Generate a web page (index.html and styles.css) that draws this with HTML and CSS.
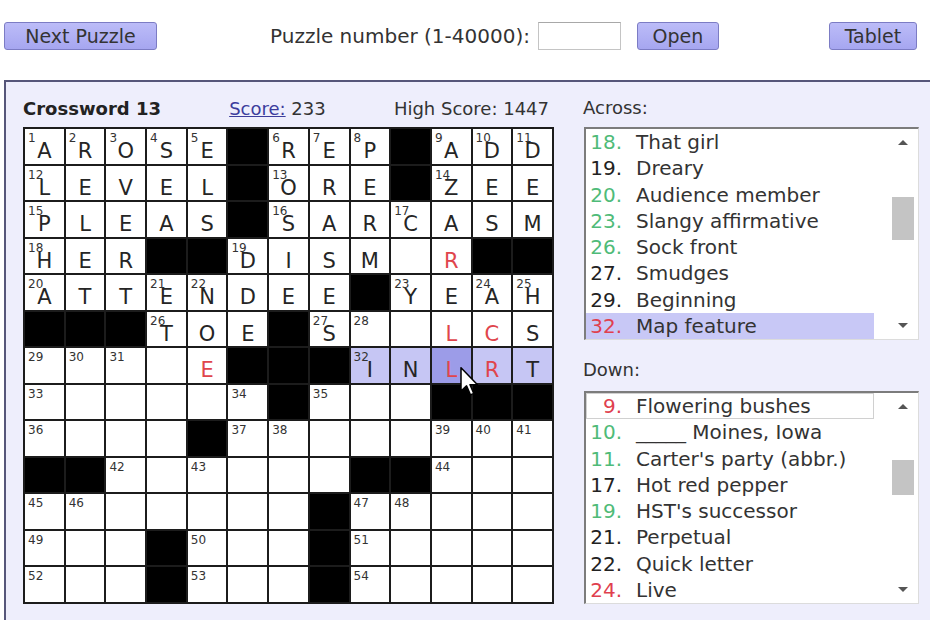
FILE: index.html
```html
<!DOCTYPE html>
<html>
<head>
<meta charset="utf-8">
<title>Crossword 13</title>
<link rel="stylesheet" href="styles.css">
</head>
<body>
<div class="top">
  <button class="btn next">Next Puzzle</button>
  <span class="lbl">Puzzle number (1-40000):</span>
  <input class="pin" type="text">
  <button class="btn open">Open</button>
  <button class="btn tablet">Tablet</button>
</div>
<div class="panel">
  <div class="left">
    <div class="head">
      <b class="title">Crossword 13</b>
      <span class="score"><a class="slink">Score:</a> 233</span>
      <span class="high">High Score: 1447</span>
    </div>
    <div class="grid">
      <div class="c"><i>1</i>A</div><div class="c"><i>2</i>R</div><div class="c"><i>3</i>O</div><div class="c"><i>4</i>S</div><div class="c"><i>5</i>E</div><div class="b"></div><div class="c"><i>6</i>R</div><div class="c"><i>7</i>E</div><div class="c"><i>8</i>P</div><div class="b"></div><div class="c"><i>9</i>A</div><div class="c"><i>10</i>D</div><div class="c"><i>11</i>D</div>
      <div class="c"><i>12</i>L</div><div class="c">E</div><div class="c">V</div><div class="c">E</div><div class="c">L</div><div class="b"></div><div class="c"><i>13</i>O</div><div class="c">R</div><div class="c">E</div><div class="b"></div><div class="c"><i>14</i>Z</div><div class="c">E</div><div class="c">E</div>
      <div class="c"><i>15</i>P</div><div class="c">L</div><div class="c">E</div><div class="c">A</div><div class="c">S</div><div class="b"></div><div class="c"><i>16</i>S</div><div class="c">A</div><div class="c">R</div><div class="c"><i>17</i>C</div><div class="c">A</div><div class="c">S</div><div class="c">M</div>
      <div class="c"><i>18</i>H</div><div class="c">E</div><div class="c">R</div><div class="b"></div><div class="b"></div><div class="c"><i>19</i>D</div><div class="c">I</div><div class="c">S</div><div class="c">M</div><div class="c"></div><div class="c red">R</div><div class="b"></div><div class="b"></div>
      <div class="c"><i>20</i>A</div><div class="c">T</div><div class="c">T</div><div class="c"><i>21</i>E</div><div class="c"><i>22</i>N</div><div class="c">D</div><div class="c">E</div><div class="c">E</div><div class="b"></div><div class="c"><i>23</i>Y</div><div class="c">E</div><div class="c"><i>24</i>A</div><div class="c"><i>25</i>H</div>
      <div class="b"></div><div class="b"></div><div class="b"></div><div class="c"><i>26</i>T</div><div class="c">O</div><div class="c">E</div><div class="b"></div><div class="c"><i>27</i>S</div><div class="c"><i>28</i></div><div class="c"></div><div class="c red">L</div><div class="c red">C</div><div class="c">S</div>
      <div class="c"><i>29</i></div><div class="c"><i>30</i></div><div class="c"><i>31</i></div><div class="c"></div><div class="c red">E</div><div class="b"></div><div class="b"></div><div class="b"></div><div class="c hl"><i>32</i>I</div><div class="c hl">N</div><div class="c cur red">L</div><div class="c hl red">R</div><div class="c hl">T</div>
      <div class="c"><i>33</i></div><div class="c"></div><div class="c"></div><div class="c"></div><div class="c"></div><div class="c"><i>34</i></div><div class="b"></div><div class="c"><i>35</i></div><div class="c"></div><div class="c"></div><div class="b"></div><div class="b"></div><div class="b"></div>
      <div class="c"><i>36</i></div><div class="c"></div><div class="c"></div><div class="c"></div><div class="b"></div><div class="c"><i>37</i></div><div class="c"><i>38</i></div><div class="c"></div><div class="c"></div><div class="c"></div><div class="c"><i>39</i></div><div class="c"><i>40</i></div><div class="c"><i>41</i></div>
      <div class="b"></div><div class="b"></div><div class="c"><i>42</i></div><div class="c"></div><div class="c"><i>43</i></div><div class="c"></div><div class="c"></div><div class="c"></div><div class="b"></div><div class="b"></div><div class="c"><i>44</i></div><div class="c"></div><div class="c"></div>
      <div class="c"><i>45</i></div><div class="c"><i>46</i></div><div class="c"></div><div class="c"></div><div class="c"></div><div class="c"></div><div class="c"></div><div class="b"></div><div class="c"><i>47</i></div><div class="c"><i>48</i></div><div class="c"></div><div class="c"></div><div class="c"></div>
      <div class="c"><i>49</i></div><div class="c"></div><div class="c"></div><div class="b"></div><div class="c"><i>50</i></div><div class="c"></div><div class="c"></div><div class="b"></div><div class="c"><i>51</i></div><div class="c"></div><div class="c"></div><div class="c"></div><div class="c"></div>
      <div class="c"><i>52</i></div><div class="c"></div><div class="c"></div><div class="b"></div><div class="c"><i>53</i></div><div class="c"></div><div class="c"></div><div class="b"></div><div class="c"><i>54</i></div><div class="c"></div><div class="c"></div><div class="c"></div><div class="c"></div>
    </div>
  </div>
  <div class="right">
    <div class="cl-label">Across:</div>
    <div class="listbox">
      <ul class="clues">
        <li><span class="n g">18.</span>That girl</li>
        <li><span class="n">19.</span>Dreary</li>
        <li><span class="n g">20.</span>Audience member</li>
        <li><span class="n g">23.</span>Slangy affirmative</li>
        <li><span class="n g">26.</span>Sock front</li>
        <li><span class="n">27.</span>Smudges</li>
        <li><span class="n">29.</span>Beginning</li>
        <li class="sel"><span class="n r">32.</span>Map feature</li>
      </ul>
      <div class="sb">
        <div class="arr up"></div>
        <div class="track"><div class="thumb t-across"></div></div>
        <div class="arr dn"></div>
      </div>
    </div>
    <div class="cl-label down">Down:</div>
    <div class="listbox">
      <ul class="clues">
        <li class="focus"><span class="n r">9.</span>Flowering bushes</li>
        <li><span class="n g">10.</span>_____ Moines, Iowa</li>
        <li><span class="n g">11.</span>Carter's party (abbr.)</li>
        <li><span class="n">17.</span>Hot red pepper</li>
        <li><span class="n g">19.</span>HST's successor</li>
        <li><span class="n">21.</span>Perpetual</li>
        <li><span class="n">22.</span>Quick letter</li>
        <li><span class="n r">24.</span>Live</li>
      </ul>
      <div class="sb">
        <div class="arr up"></div>
        <div class="track"><div class="thumb t-down"></div></div>
        <div class="arr dn"></div>
      </div>
    </div>
  </div>
  <svg class="cursor" width="20" height="30" viewBox="0 0 13 20">
    <path d="M0.5,0.5 L0.5,16 L4.2,12.6 L6.8,18.6 L9,17.6 L6.5,11.8 L11.5,11.8 Z" fill="#fff" stroke="#000" stroke-width="1" stroke-linejoin="round"/>
  </svg>
</div>
</body>
</html>
```

FILE: styles.css
```css
html, body {
  margin: 0;
  padding: 0;
  background: #ffffff;
  overflow: hidden;
  width: 930px;
  height: 620px;
}
body {
  font-family: "DejaVu Sans", Verdana, sans-serif;
  color: #333;
}
.top {
  display: flex;
  align-items: center;
  padding-top: 22px;
  height: 28px;
}
.btn {
  box-sizing: border-box;
  height: 28px;
  font-family: "DejaVu Sans", Verdana, sans-serif;
  font-size: 19px;
  color: #333;
  background: linear-gradient(#bcbcf8, #a6a6f0);
  border: 1px solid #7c7cc4;
  border-radius: 3px;
  padding: 0;
  line-height: 26px;
}
.next { margin-left: 4px; width: 153px; }
.lbl {
  margin-left: 113px;
  font-size: 20px;
  color: #333;
  white-space: nowrap;
}
.pin {
  box-sizing: border-box;
  margin-left: 8px;
  width: 83px;
  height: 28px;
  border: 1px solid #c4c4c4;
  border-top-color: #a8a8a8;
  background: #fff;
  padding: 0;
}
.open { margin-left: 16px; width: 82px; }
.tablet { margin-left: 110px; width: 88px; }

.panel {
  position: relative;
  margin-top: 30px;
  margin-left: 4px;
  width: 924px;
  height: 538px;
  overflow: hidden;
  background: #eeeefc;
  border-top: 2px solid #56567a;
  border-left: 2px solid #56567a;
  display: flex;
  align-items: flex-start;
}
.left {
  padding-left: 17px;
  padding-top: 15px;
  width: 531px;
}
.head {
  display: flex;
  justify-content: space-between;
  align-items: center;
  height: 22px;
  font-size: 18px;
  padding-right: 5px;
  margin-bottom: 8px;
  white-space: nowrap;
}
.title {
  font-weight: bold;
  color: #222;
}
.slink {
  color: #3c3c9c;
  text-decoration: underline;
}
.grid {
  box-sizing: border-box;
  width: 531px;
  height: 477px;
  padding: 2px;
  gap: 2px;
  background: #1c1c1c;
  display: grid;
  grid-template-columns: repeat(13, 1fr);
  grid-template-rows: repeat(13, 1fr);
}
.c, .b {
  position: relative;
  box-sizing: border-box;
  overflow: hidden;
}
.c {
  background: #fff;
  text-align: center;
  font-size: 21px;
  line-height: 21px;
  padding-top: 12px;
  color: #252525;
}
.b { background: #000; }
.c.hl { background: #c6c6f4; }
.c.cur { background: #9c9ce8; }
.c.red { color: #e0454c; }
.c i {
  position: absolute;
  top: 3px;
  left: 3px;
  font-style: normal;
  font-size: 12px;
  line-height: 12px;
  color: #333;
}

.right {
  margin-left: 30px;
  padding-top: 15px;
  width: 340px;
}
.cl-label {
  font-size: 18px;
  line-height: 22px;
  height: 22px;
  margin-bottom: 8px;
  margin-left: -1px;
  color: #333;
}
.cl-label.down {
  margin-top: 19px;
  margin-bottom: 10px;
}
.listbox {
  box-sizing: border-box;
  width: 335px;
  height: 213px;
  display: flex;
  background: #fff;
  border-top: 2px solid #7c7c7c;
  border-left: 2px solid #7c7c7c;
  border-right: 1px solid #dcdcdc;
  border-bottom: 1px solid #dcdcdc;
}
.clues {
  list-style: none;
  margin: 0;
  padding: 0;
  width: 288px;
  font-size: 20px;
}
.clues li {
  box-sizing: border-box;
  height: 26.25px;
  line-height: 26.25px;
  white-space: nowrap;
  color: #333;
}
.clues li.sel { background: #c8c8f6; }
.clues li.focus { outline: 1px solid #d0d0d0; outline-offset: -1px; }
.n {
  display: inline-block;
  width: 36px;
  text-align: right;
  margin-right: 14px;
  color: #222;
}
.n.g { color: #4fbb78; }
.n.r { color: #e0404e; }
.sb {
  width: 44px;
  display: flex;
  flex-direction: column;
  align-items: flex-start;
}
.arr {
  width: 0;
  height: 0;
  margin-left: 24px;
  border-left: 5px solid transparent;
  border-right: 5px solid transparent;
}
.arr.up {
  margin-top: 11px;
  border-bottom: 5px solid #555;
}
.arr.dn {
  margin-bottom: 11px;
  border-top: 5px solid #555;
}
.track {
  flex: 1;
  width: 100%;
}
.thumb {
  margin-left: 18px;
  width: 22px;
  background: #c4c4c4;
}
.t-across { margin-top: 52px; height: 43px; }
.t-down { margin-top: 51px; height: 35px; }

.cursor {
  position: absolute;
  left: 454px;
  top: 285px;
}
```
